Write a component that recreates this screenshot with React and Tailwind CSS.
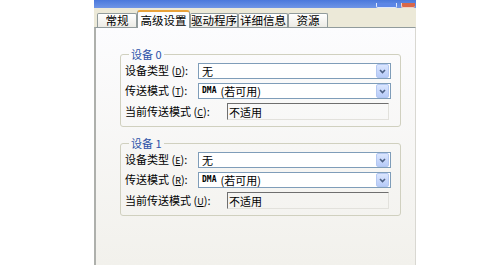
import React from "react";

const font = { fontFamily: '"Noto Sans CJK SC", "Liberation Sans", sans-serif' };

function Arrow() {
  return (
    <div className="w-[13px] h-[14px] mr-px rounded-[2px] bg-gradient-to-b from-[#dbe6fe] to-[#b7cbf8] border border-[#b4c8f2] flex items-center justify-center">
      <svg width="7" height="5" viewBox="0 0 7 5">
        <path d="M1 1 L3.5 3.5 L6 1" fill="none" stroke="#4d6185" strokeWidth="1.6" />
      </svg>
    </div>
  );
}

function Select({ children }) {
  return (
    <div className="w-[193px] h-[16px] bg-white border border-[#7f9db9] flex items-center">
      <div className="flex-1 pl-[3px] text-[11px] leading-[14px] text-black flex items-center">{children}</div>
      <Arrow />
    </div>
  );
}

function Label({ text, k, w }) {
  return (
    <div className={`${w} text-[11px] leading-[14px] text-black shrink-0 whitespace-nowrap`}>
      {text} (<span className="underline text-[9px]">{k}</span>):
    </div>
  );
}

function Group({ title, k1, k2, k3, cls }) {
  return (
    <fieldset className={`w-[281px] ml-[24px] border border-[#d0d0bf] rounded-[3px] pl-[4px] pb-[6px] ${cls}`}>
      <legend className="ml-[4px] px-[2px] text-[11px] leading-[12px] text-[#2c52a8]">{title}</legend>
      <div className="flex flex-col gap-[4px] pt-[3px]">
        <div className="flex items-center">
          <Label text="设备类型" k={k1} w="w-[73px]" />
          <Select>无</Select>
        </div>
        <div className="flex items-center">
          <Label text="传送模式" k={k2} w="w-[73px]" />
          <Select>
            <span className="text-[8px] font-bold mr-[4px]" style={{ fontFamily: '"DejaVu Sans Mono", monospace' }}>DMA</span>
            <span>(若可用)</span>
          </Select>
        </div>
        <div className="flex items-center">
          <Label text="当前传送模式" k={k3} w="w-[102px]" />
          <div className="w-[162px] h-[17px] border-t border-l border-t-[#6f6f6f] border-l-[#6f6f6f] border-r border-b border-r-[#e2e1dc] border-b-[#e2e1dc] flex items-center pl-[1px] text-[11px] leading-[14px] text-black">
            不适用
          </div>
        </div>
      </div>
    </fieldset>
  );
}

function Tab({ label, w, selected }) {
  if (selected) {
    return (
      <div className={`${w} shrink-0 whitespace-nowrap h-[18px] -mb-px relative z-10 bg-[#fcfcfe] border-l border-r border-[#919b9c] border-t-[2px] border-t-[#e9a23a] rounded-t-[3px] flex items-start justify-center pt-[1px] text-[11.5px] leading-[14px] text-black`}>
        {label}
      </div>
    );
  }
  return (
    <div className={`${w} shrink-0 whitespace-nowrap h-[14px] bg-gradient-to-b from-[#ffffff] to-[#ecebe5] border-l border-r border-t border-[#919b9c] rounded-t-[2px] flex items-center justify-center text-[11.5px] leading-[13px] text-black`}>
      {label}
    </div>
  );
}

export default function App() {
  return (
    <div className="w-[500px] h-[265px] bg-white overflow-hidden" style={font}>
      <div className="ml-[94px] w-[322px] h-[265px] flex flex-col">
        <div className="h-[8px] bg-gradient-to-b from-[#4a78dc] to-[#6f95e6] flex justify-end items-end pr-[1px] gap-[4px]">
          <div className="w-[21px] h-[5px] bg-[#5c86e6] border-b border-l border-r border-[#dfe8fb] rounded-b-[2px]" />
          <div className="w-[14px] h-[5px] bg-[#d8674a] border-b border-l border-[#f0d0c6] rounded-b-[2px]" />
        </div>
        <div className="h-[19px] bg-[#ece9d8] flex items-end pl-[3px]">
          <Tab label="常规" w="w-[40px]" />
          <Tab label="高级设置" w="w-[53px]" selected />
          <Tab label="驱动程序" w="w-[48px]" />
          <Tab label="详细信息" w="w-[50px]" />
          <Tab label="资源" w="w-[40px]" />
        </div>
        <div className="flex-1 border-t border-t-[#919b9c] border-l-[2px] border-l-[#aeb0ac] border-r border-r-[#d9d8d2] bg-gradient-to-b from-[#fcfcfe] to-[#f2f1ec] pt-[20px]">
          <Group title="设备 0" k1="D" k2="T" k3="C" cls="" />
          <Group title="设备 1" k1="E" k2="R" k3="U" cls="mt-[10px]" />
        </div>
      </div>
    </div>
  );
}
